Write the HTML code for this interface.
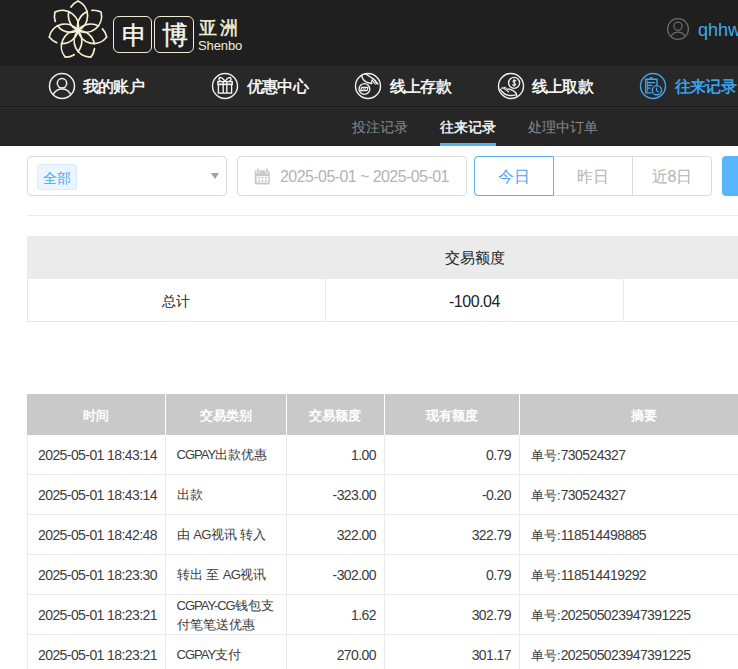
<!DOCTYPE html>
<html><head><meta charset="utf-8">
<style>
*{box-sizing:border-box;margin:0;padding:0}
html,body{width:738px;height:669px;overflow:hidden;background:#fff;font-family:"Liberation Sans",sans-serif}
.abs{position:absolute}
#top{position:absolute;left:0;top:0;width:738px;height:66px;background:#1f1f1f}
#nav{position:absolute;left:0;top:66px;width:738px;height:41px;background:#282828;border-bottom:1px solid #151515}
#sub{position:absolute;left:0;top:107px;width:738px;height:39px;background:#262626}
.navt{position:absolute;top:77px;font-size:16px;letter-spacing:-0.8px;font-weight:normal;-webkit-text-stroke:0.45px currentColor;color:#fff;line-height:20px;white-space:nowrap}
.subt{position:absolute;top:117px;font-size:14px;color:#8a8a8a;line-height:20px;white-space:nowrap}
.ico{position:absolute}
.box{position:absolute;border:1px solid #dddddd;border-radius:4px;background:#fff}
.tc{position:absolute;white-space:nowrap;color:#3c3c3c;font-size:13px;line-height:20px}
.n{font-size:14px;letter-spacing:-0.58px}
</style></head><body>
<div id="top"></div>
<div id="nav"></div>
<div id="sub"></div>
<div class="abs" style="left:0;top:107px;width:738px;height:1px;background:#2f2f2f"></div>

<!-- logo flower -->
<svg class="abs" style="left:46px;top:0px" width="64" height="62" viewBox="-32 -30.5 64 62">
 <g fill="none" stroke="#f3f0cf" stroke-width="1.7" stroke-linecap="round">
  <path d="M0,0 A16.131,16.131 0 0,0 0,-29.5 M0,0 A16.131,16.131 0 0,1 -9.043,-18.953 M-7.042,-23.466 A16.131,16.131 0 0,1 0,-29.5"/>
  <path transform="rotate(51.429)" d="M0,0 A16.131,16.131 0 0,0 0,-29.5 M0,0 A16.131,16.131 0 0,1 -9.043,-18.953 M-7.042,-23.466 A16.131,16.131 0 0,1 0,-29.5"/>
  <path transform="rotate(102.857)" d="M0,0 A16.131,16.131 0 0,0 0,-29.5 M0,0 A16.131,16.131 0 0,1 -9.043,-18.953 M-7.042,-23.466 A16.131,16.131 0 0,1 0,-29.5"/>
  <path transform="rotate(154.286)" d="M0,0 A16.131,16.131 0 0,0 0,-29.5 M0,0 A16.131,16.131 0 0,1 -9.043,-18.953 M-7.042,-23.466 A16.131,16.131 0 0,1 0,-29.5"/>
  <path transform="rotate(205.714)" d="M0,0 A16.131,16.131 0 0,0 0,-29.5 M0,0 A16.131,16.131 0 0,1 -9.043,-18.953 M-7.042,-23.466 A16.131,16.131 0 0,1 0,-29.5"/>
  <path transform="rotate(257.143)" d="M0,0 A16.131,16.131 0 0,0 0,-29.5 M0,0 A16.131,16.131 0 0,1 -9.043,-18.953 M-7.042,-23.466 A16.131,16.131 0 0,1 0,-29.5"/>
  <path transform="rotate(308.571)" d="M0,0 A16.131,16.131 0 0,0 0,-29.5 M0,0 A16.131,16.131 0 0,1 -9.043,-18.953 M-7.042,-23.466 A16.131,16.131 0 0,1 0,-29.5"/>
 </g>
 <circle cx="0" cy="0" r="2.2" fill="#f0f0ea"/>
</svg>
<!-- logo boxes -->
<div class="abs" style="left:113px;top:16px;width:39px;height:37px;border:1.6px solid #efedd4;border-radius:6px"></div>
<div class="abs" style="left:154px;top:16px;width:40px;height:37px;border:1.6px solid #efedd4;border-radius:6px"></div>
<div class="abs" style="left:114.5px;top:15px;width:39px;text-align:center;font-size:25px;line-height:40px;color:#f7f6ea;font-weight:normal;-webkit-text-stroke:0.4px #f7f6ea">申</div>
<div class="abs" style="left:154.5px;top:15px;width:40px;text-align:center;font-size:26px;line-height:40px;color:#f7f6ea;font-weight:normal;-webkit-text-stroke:0.4px #f7f6ea">博</div>
<div class="abs" style="left:199px;top:16px;font-size:18px;line-height:24px;color:#f3f0d8;font-weight:normal;-webkit-text-stroke:0.5px #f3f0d8;letter-spacing:3px">亚洲</div>
<div class="abs" style="left:198px;top:38px;font-size:13px;line-height:16px;color:#f0eed8;letter-spacing:-0.1px">Shenbo</div>

<!-- user top right -->
<svg class="abs" style="left:666px;top:17px" width="24" height="24" viewBox="0 0 24 24">
 <g fill="none" stroke="#6b6b6b" stroke-width="1.3">
  <circle cx="12" cy="12" r="10.4"/><circle cx="12" cy="9.2" r="4.1"/><path d="M5.2,19.2 C8,13.8 16,13.8 18.8,19.2"/>
 </g>
</svg>
<div class="abs" style="left:698px;top:19px;font-size:18px;line-height:22px;color:#3ea8f5">qhhw</div>

<!-- nav icons -->
<svg class="ico" style="left:48px;top:72px" width="28" height="28" viewBox="0 0 28 28">
 <g fill="none" stroke="#f0f0f0" stroke-width="1.5">
  <circle cx="14" cy="14" r="12.5"/><circle cx="14" cy="11.3" r="4.7"/><path d="M5.3,22.3 C9,15.2 19,15.2 22.7,22.3"/>
 </g>
</svg>
<div class="navt" style="left:83px">我的账户</div>

<svg class="ico" style="left:211px;top:72px" width="28" height="28" viewBox="0 0 28 28">
 <g fill="none" stroke="#f0f0f0" stroke-width="1.4">
  <circle cx="14" cy="14" r="12.5"/>
  <rect x="6.8" y="9.6" width="14.4" height="2.8"/><rect x="7.4" y="12.4" width="13.2" height="8.7"/>
  <path d="M12.2,9.6 V21.1 M15.8,9.6 V21.1"/>
  <path d="M14,9.3 C12,6 9,4.5 8,6.5 C7.5,8 9,9 10,9.3 M14,9.3 C16,6 19,4.5 20,6.5 C20.5,8 19,9 18,9.3"/>
 </g>
</svg>
<div class="navt" style="left:247px">优惠中心</div>

<svg class="ico" style="left:354px;top:72px" width="28" height="28" viewBox="0 0 28 28">
 <g fill="none" stroke="#f0f0f0" stroke-width="1.4" stroke-linejoin="round" stroke-linecap="round">
  <circle cx="14" cy="14" r="12.5"/>
  <circle cx="10.4" cy="17" r="5.4"/>
  <path d="M7.6,15.3 H14 L13,18.6 H6.6 Z" stroke-width="1.2"/>
  <path d="M9.6,15.5 L8.7,18.4 M11.6,15.5 L10.7,18.4" stroke-width="1"/>
  <path d="M7.6,3.2 C8,6 9.5,8.5 12,9.8 C14,10.8 16,11 17.6,11.6"/>
  <path d="M10.8,1.6 C13,2.5 15,4 17.5,5.6 C20,7.2 22.5,9.5 24,12.2"/>
  <path d="M17.8,11.6 C17.6,10 17.4,8.8 18,8 L21.2,12 M19.8,7.2 L22.8,11.6" stroke-width="1.2"/>
 </g>
</svg>
<div class="navt" style="left:390px">线上存款</div>

<svg class="ico" style="left:497px;top:72px" width="28" height="28" viewBox="0 0 28 28">
 <g fill="none" stroke="#f0f0f0" stroke-width="1.4" stroke-linejoin="round" stroke-linecap="round">
  <circle cx="14" cy="14" r="12.5"/>
  <circle cx="17.1" cy="10.9" r="5.5"/>
  <path d="M18.9,8.9 C18.4,8.2 16.2,8 16,9.4 C15.8,10.8 18.6,10.6 18.6,12.2 C18.6,13.6 16.4,13.8 15.5,12.9 M17.2,7.4 V14.3" stroke-width="1.1"/>
  <path d="M3.6,17.6 C5.5,20.6 8.5,22.6 11.5,23.3 C14,23.8 16.2,23.6 18.4,22.9"/>
  <path d="M11.8,17 C14.5,17.5 17.2,18.8 18.8,20.8 C19.3,21.6 19.6,22.5 19.8,23.6"/>
  <path d="M4.4,16.2 C5.8,15.4 7.2,16.2 8.6,17.6 L11.6,19.8 M7.2,15.2 C8.6,15.3 9.6,16.2 11,17.6" stroke-width="1.1"/>
 </g>
</svg>
<div class="navt" style="left:532px">线上取款</div>

<svg class="ico" style="left:639px;top:72px" width="28" height="28" viewBox="0 0 28 28">
 <g fill="none" stroke="#3ea8f0" stroke-width="1.4" stroke-linejoin="round">
  <circle cx="14" cy="14" r="12.5"/>
  <path d="M12.8,20.9 H6.8 V7.2 H18 V13.4"/>
  <path d="M8.6,8.6 V19.6" stroke-width="0.9"/>
  <path d="M10.8,7 C10.8,5 13.6,5 13.6,7" stroke-width="1.2"/>
  <path d="M8.4,10.6 H16 M8.4,13.3 H13.3 M8.4,16.2 H11.6" stroke-width="1.2"/>
  <circle cx="17.9" cy="18.2" r="4.6"/>
  <path d="M17.5,15.4 V18.6 L19.6,20.2" stroke-width="1.2"/>
 </g>
</svg>
<div class="navt" style="left:675px;color:#3ea8f5">往来记录</div>

<!-- sub nav -->
<div class="subt" style="left:352px">投注记录</div>
<div class="subt" style="left:440px;color:#fff;-webkit-text-stroke:0.35px #fff">往来记录</div>
<div class="abs" style="left:440px;top:143px;width:56px;height:3px;background:#4eb3f5"></div>
<div class="subt" style="left:528px">处理中订单</div>

<!-- filter row -->
<div class="box" style="left:27px;top:156px;width:200px;height:40px"></div>
<div class="abs" style="left:37px;top:164px;width:40px;height:26px;background:#ecf5ff;border:1px solid #d9ecff;border-radius:3px"></div>
<div class="abs" style="left:43px;top:168px;font-size:14px;line-height:20px;color:#4aa6f5">全部</div>
<div class="abs" style="left:211px;top:173px;width:0;height:0;border-left:4px solid transparent;border-right:4px solid transparent;border-top:6px solid #a0a0a0"></div>

<div class="box" style="left:237px;top:156px;width:230px;height:40px"></div>
<svg class="abs" style="left:250px;top:164px" width="26" height="26" viewBox="0 0 26 26">
 <g fill="#c9c9c9">
  <rect x="4.7" y="6.2" width="15.1" height="14.2" rx="1.6"/>
 </g>
 <rect x="6.6" y="12.1" width="11.7" height="6.4" fill="#fff"/>
 <rect x="6.3" y="5" width="3.4" height="4.6" rx="1.5" fill="#fff"/>
 <rect x="15.2" y="5" width="3.4" height="4.6" rx="1.5" fill="#fff"/>
 <g fill="#c9c9c9">
  <rect x="7.1" y="4.6" width="1.9" height="4.4" rx="0.9"/>
  <rect x="16" y="4.6" width="1.9" height="4.4" rx="0.9"/>
  <rect x="8.2" y="12.9" width="1.8" height="1.8"/><rect x="11.6" y="12.9" width="1.8" height="1.8"/><rect x="14.9" y="12.9" width="1.8" height="1.8"/>
  <rect x="8.2" y="16" width="1.8" height="1.8"/><rect x="11.6" y="16" width="1.8" height="1.8"/><rect x="14.9" y="16" width="1.8" height="1.8"/>
 </g>
</svg>
<div class="abs" style="left:280px;top:167px;font-size:16px;letter-spacing:-0.57px;line-height:20px;color:#b4b4b4;white-space:nowrap">2025-05-01 ~ 2025-05-01</div>

<div class="abs" style="left:474px;top:156px;width:238px;height:40px;border:1px solid #dddddd;border-radius:4px"></div>
<div class="abs" style="left:553px;top:157px;width:1px;height:38px;background:#dddddd"></div>
<div class="abs" style="left:632px;top:157px;width:1px;height:38px;background:#dddddd"></div>
<div class="abs" style="left:474px;top:156px;width:80px;height:40px;border:1px solid #5bb3f5;border-radius:4px 0 0 4px"></div>
<div class="abs" style="left:474px;top:167px;width:80px;text-align:center;font-size:16px;line-height:20px;color:#4aa6f5">今日</div>
<div class="abs" style="left:553px;top:167px;width:80px;text-align:center;font-size:16px;line-height:20px;color:#b4b4b4">昨日</div>
<div class="abs" style="left:632px;top:167px;width:80px;text-align:center;font-size:16px;line-height:20px;color:#b4b4b4">近8日</div>
<div class="abs" style="left:722px;top:156px;width:40px;height:40px;background:#56b5fb;border-radius:4px"></div>

<div class="abs" style="left:27px;top:215px;width:711px;height:1px;background:#ebebeb"></div>

<!-- summary -->
<div class="abs" style="left:27px;top:236px;width:711px;height:43px;background:#ebebeb"></div>
<div class="abs" style="left:27px;top:279px;width:711px;height:43px;border:1px solid #e8e8e8;border-top:none;border-right:none"></div>
<div class="abs" style="left:325px;top:279px;width:1px;height:42px;background:#e8e8e8"></div>
<div class="abs" style="left:623px;top:279px;width:1px;height:42px;background:#e8e8e8"></div>
<div class="abs" style="left:326px;top:248px;width:297px;text-align:center;font-size:15px;line-height:20px;color:#222">交易额度</div>
<div class="abs" style="left:27px;top:291px;width:298px;text-align:center;font-size:14px;line-height:20px;color:#222">总计</div>
<div class="abs" style="left:326px;top:292px;width:297px;text-align:center;font-size:16px;letter-spacing:-0.47px;line-height:20px;color:#222">-100.04</div>

<!-- main table -->
<div class="abs" style="left:27px;top:394px;width:711px;height:41px;background:#c9c9c9"></div>
<div class="abs" style="left:165px;top:394px;width:1px;height:41px;background:#fff"></div>
<div class="abs" style="left:286px;top:394px;width:1px;height:41px;background:#fff"></div>
<div class="abs" style="left:384px;top:394px;width:1px;height:41px;background:#fff"></div>
<div class="abs" style="left:519px;top:394px;width:1px;height:41px;background:#fff"></div>
<div class="abs" style="left:27px;top:406px;width:138px;text-align:center;font-size:13px;line-height:20px;color:#fff;font-weight:bold">时间</div>
<div class="abs" style="left:165px;top:406px;width:121px;text-align:center;font-size:13px;line-height:20px;color:#fff;font-weight:bold">交易类别</div>
<div class="abs" style="left:286px;top:406px;width:98px;text-align:center;font-size:13px;line-height:20px;color:#fff;font-weight:bold">交易额度</div>
<div class="abs" style="left:384px;top:406px;width:135px;text-align:center;font-size:13px;line-height:20px;color:#fff;font-weight:bold">现有额度</div>
<div class="abs" style="left:519px;top:406px;width:250px;text-align:center;font-size:13px;line-height:20px;color:#fff;font-weight:bold">摘要</div>

<!-- grid lines body -->
<div class="abs" style="left:27px;top:435px;width:1px;height:234px;background:#ebebeb"></div>
<div class="abs" style="left:165px;top:435px;width:1px;height:234px;background:#ebebeb"></div>
<div class="abs" style="left:286px;top:435px;width:1px;height:234px;background:#ebebeb"></div>
<div class="abs" style="left:384px;top:435px;width:1px;height:234px;background:#ebebeb"></div>
<div class="abs" style="left:519px;top:435px;width:1px;height:234px;background:#ebebeb"></div>
<div class="abs" style="left:27px;top:474px;width:711px;height:1px;background:#ebebeb"></div>
<div class="abs" style="left:27px;top:514px;width:711px;height:1px;background:#ebebeb"></div>
<div class="abs" style="left:27px;top:554px;width:711px;height:1px;background:#ebebeb"></div>
<div class="abs" style="left:27px;top:594px;width:711px;height:1px;background:#ebebeb"></div>
<div class="abs" style="left:27px;top:634px;width:711px;height:1px;background:#ebebeb"></div>

<div class="tc" style="left:38px;top:445px"><span class="n">2025-05-01 18:43:14</span></div>
<div class="tc" style="left:176.5px;top:445px"><span style="letter-spacing:-1px">CGPAY</span>出款优惠</div>
<div class="tc" style="left:286px;top:445px;width:90px;text-align:right"><span class="n">1.00</span></div>
<div class="tc" style="left:384px;top:445px;width:127px;text-align:right"><span class="n">0.79</span></div>
<div class="tc" style="left:531px;top:445px">单号:<span class="n">730524327</span></div>

<div class="tc" style="left:38px;top:485px"><span class="n">2025-05-01 18:43:14</span></div>
<div class="tc" style="left:176.5px;top:485px">出款</div>
<div class="tc" style="left:286px;top:485px;width:90px;text-align:right"><span class="n">-323.00</span></div>
<div class="tc" style="left:384px;top:485px;width:127px;text-align:right"><span class="n">-0.20</span></div>
<div class="tc" style="left:531px;top:485px">单号:<span class="n">730524327</span></div>

<div class="tc" style="left:38px;top:525px"><span class="n">2025-05-01 18:42:48</span></div>
<div class="tc" style="left:176.5px;top:525px">由 <span style="letter-spacing:-0.6px">AG</span>视讯 转入</div>
<div class="tc" style="left:286px;top:525px;width:90px;text-align:right"><span class="n">322.00</span></div>
<div class="tc" style="left:384px;top:525px;width:127px;text-align:right"><span class="n">322.79</span></div>
<div class="tc" style="left:531px;top:525px">单号:<span class="n">118514498885</span></div>

<div class="tc" style="left:38px;top:565px"><span class="n">2025-05-01 18:23:30</span></div>
<div class="tc" style="left:176.5px;top:565px">转出 至 <span style="letter-spacing:-0.6px">AG</span>视讯</div>
<div class="tc" style="left:286px;top:565px;width:90px;text-align:right"><span class="n">-302.00</span></div>
<div class="tc" style="left:384px;top:565px;width:127px;text-align:right"><span class="n">0.79</span></div>
<div class="tc" style="left:531px;top:565px">单号:<span class="n">118514419292</span></div>

<div class="tc" style="left:38px;top:605px"><span class="n">2025-05-01 18:23:21</span></div>
<div class="tc" style="left:176.5px;top:596px;line-height:19px"><span style="letter-spacing:-1px">CGPAY-CG</span>钱包支<br>付笔笔送优惠</div>
<div class="tc" style="left:286px;top:605px;width:90px;text-align:right"><span class="n">1.62</span></div>
<div class="tc" style="left:384px;top:605px;width:127px;text-align:right"><span class="n">302.79</span></div>
<div class="tc" style="left:531px;top:605px">单号:<span class="n">202505023947391225</span></div>

<div class="tc" style="left:38px;top:645px"><span class="n">2025-05-01 18:23:21</span></div>
<div class="tc" style="left:176.5px;top:645px"><span style="letter-spacing:-1px">CGPAY</span>支付</div>
<div class="tc" style="left:286px;top:645px;width:90px;text-align:right"><span class="n">270.00</span></div>
<div class="tc" style="left:384px;top:645px;width:127px;text-align:right"><span class="n">301.17</span></div>
<div class="tc" style="left:531px;top:645px">单号:<span class="n">202505023947391225</span></div>

</body></html>
